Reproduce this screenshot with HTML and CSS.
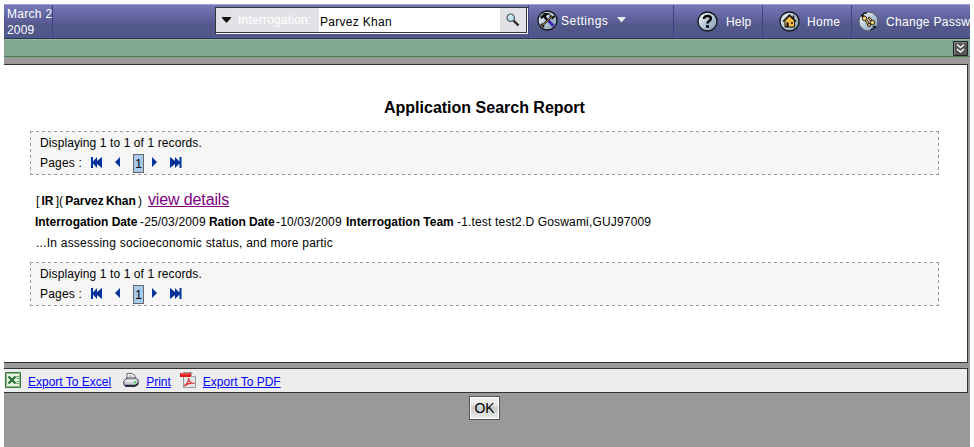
FILE: index.html
```html
<!DOCTYPE html>
<html lang="en">
<head>
<meta charset="utf-8">
<title>Application Search Report</title>
<link rel="stylesheet" href="styles.css">
</head>
<body>
<svg class="defs" width="0" height="0">
  <defs>
    <linearGradient id="ball" x1="0" y1="0" x2="1" y2="1"><stop offset="0" stop-color="#fff"/><stop offset=".5" stop-color="#b5c8d6"/><stop offset="1" stop-color="#7796ae"/></linearGradient>
    <symbol id="pager" viewBox="0 0 92 11">
      <path d="M0 0h2v4.500l4-4.500v4l5-4v11l-5-4v4l-4-4.500v4.500h-2zM29 0v10l-5-5zM61 0v10l5-5zM79 0l5 4v-4l4.500 4.500v-4.500h2v11h-2v-4.500l-4.500 4.500v-4l-5 4z" fill="#039"/>
    </symbol>
  </defs>
</svg>
<div class="app">
  <header class="topbar">
    <div class="date"><span class="d1">March 2</span><span class="d2">2009</span></div>
    <div class="finder">
      <div class="search">
        <div class="scope">
          <svg width="9" height="6" viewBox="0 0 9 6"><path d="M0 0h9v1L5 5.500H4L0 1z" fill="#111"/></svg>
          <span class="scope-label">Interrogation:</span>
        </div>
        <div class="query"><span>Parvez Khan</span></div>
        <div class="go">
          <svg width="14" height="14" viewBox="0 0 14 14"><path d="M7.500 7.500l5 5" stroke="#222" stroke-width="2.300"/><circle cx="4.700" cy="4.700" r="3.700" fill="#c5e4f2" stroke="#46555f" stroke-width="1.200"/><path d="M2.500 4.500q.3-2 2.300-2" fill="none" stroke="#fff"/></svg>
        </div>
      </div>
    </div>
    <div class="item settings">
      <svg width="21" height="21" viewBox="0 0 21 21"><circle cx="10.500" cy="10.500" r="9.500" fill="url(#ball)" stroke="#15171c" stroke-width="1.300"/><path d="M10.500 9.500l6 6.500" stroke="#4724b5" stroke-width="3"/><path d="M3 7l4-4h5l1.500 2-3-.5-1.500 2 2 3-1.500 1.500-3-3.500-2 1.500z" fill="#111"/><path d="M4.500 16L15 6.500m-2-1l2.500 2.500 2-2M4 14l3 3" fill="none" stroke="#111" stroke-width="2"/><path d="M5 15.500L15 6.500" stroke="#d5b45b" stroke-width=".8"/></svg>
      <span class="t-settings">Settings</span>
      <svg class="caret" width="9" height="6" viewBox="0 0 9 6"><path d="M0 0h9L4.500 5.500z" fill="#e8e8ee"/></svg>
    </div>
    <div class="item help">
      <svg width="21" height="21" viewBox="0 0 21 21"><circle cx="10.500" cy="10.500" r="9.500" fill="url(#ball)" stroke="#15171c" stroke-width="1.300"/><path d="M7.200 8V6.500Q8 5 10.500 5q3.300 0 3.300 2.500 0 1.500-1.500 2.300-1.800 1-1.800 2.700" fill="none" stroke="#000" stroke-width="2.500"/><path d="M9 14.200h3v2.500H9z"/></svg>
      <span class="t-help">Help</span>
    </div>
    <div class="item home">
      <svg width="21" height="21" viewBox="0 0 21 21"><circle cx="10.500" cy="10.500" r="9.500" fill="url(#ball)" stroke="#15171c" stroke-width="1.300"/><path d="M6 9.500v6.500h9.500V9.500l-5-4.500z" fill="#f4bd42" stroke="#17120a"/><path d="M4 10.500l6.500-6.500 6.500 6.500M14.500 8V4.500" fill="none" stroke="#17120a" stroke-width="1.500"/><path d="M7.500 11.500h2V16h-2z"/><path d="M12 11h2v2h-2z" fill="#5a3800"/></svg>
      <span class="t-home">Home</span>
    </div>
    <div class="item change">
      <svg width="21" height="21" viewBox="0 0 21 21"><circle cx="10.500" cy="10.500" r="9.500" fill="url(#ball)" stroke="#55616c" stroke-width="1"/><path d="M3.500 5Q6 1.500 9 2M17.500 15.500q-2 3-5 3.500" fill="none" stroke="#111" stroke-width="1.300"/><path d="M3 4l4 .500-3 2zM18 17l-4-1 3-1.500z"/><g fill="#f6d47b" stroke="#2c1c08"><path d="M6.500 8l3.500 6.500 2-1-4-6z"/><circle cx="6.500" cy="7.500" r="2.200"/><circle cx="11" cy="14" r="1.500"/><path d="M10 7l3.500 4 1.200-1.200-3.500-3.800z"/><circle cx="14.500" cy="11.500" r="2.200"/></g></svg>
      <span class="t-change">Change Passw</span>
    </div>
  </header>
  <div class="strip">
    <svg width="15" height="15" viewBox="0 0 15 15"><path d="M.5.5h14v14H.5z" fill="#555" stroke="#222"/><path d="M1.500 13.500v-12h12" fill="none" stroke="#888"/><path d="M4 3.500l3.500 3L11 3.500M4 8l3.500 3L11 8" fill="none" stroke="#fff" stroke-width="1.500"/></svg>
  </div>
  <main class="panel">
    <h1><span class="t-title">Application Search Report</span></h1>
    <section class="pages">
      <p><span class="t-disp">Displaying 1 to 1 of 1 records.</span></p>
      <div class="nav"><span class="t-pages">Pages :</span><div class="ctl"><svg width="92" height="11"><use href="#pager"/></svg><span class="cur">1</span></div></div>
    </section>
    <article class="result">
      <p class="line head"><span class="t-name">[ <b>IR</b> ]( <b>Parvez Khan</b> )</span> <a class="t-view">view details</a></p>
      <p class="line meta"><b class="m1">Interrogation Date</b> <span class="m2">-25/03/2009</span> <b class="m3">Ration Date</b> <span class="m4">-10/03/2009</span> <b class="m5">Interrogation Team</b> <span class="m6">-1.test test2.D Goswami,GUJ97009</span></p>
      <p class="line snippet"><span class="t-snip">...In assessing socioeconomic status, and more partic</span></p>
    </article>
    <section class="pages">
      <p><span class="t-disp">Displaying 1 to 1 of 1 records.</span></p>
      <div class="nav"><span class="t-pages">Pages :</span><div class="ctl"><svg width="92" height="11"><use href="#pager"/></svg><span class="cur">1</span></div></div>
    </section>
  </main>
  <footer class="exports">
    <svg width="16" height="16" viewBox="0 0 16 16"><path d="M.5.5h15v15H.5z" fill="#e9f3e3" stroke="#397c40"/><path d="M1.500 1.500h13v13h-13z" fill="none" stroke="#8eb982"/><path d="M3.500 4.500l7 7M10.500 4.500L3.500 11.500" stroke="#28733a" stroke-width="2.400"/><path d="M11 4.500h3M11.500 6.500H14M11.500 9.500H14M11 11.500h3" stroke="#77a477"/></svg>
    <a class="t-excel">Export To Excel</a>
    <svg class="printer" width="16" height="16" viewBox="0 0 16 16"><path d="M4 7V1.500h5l3 2V7" fill="#fff" stroke="#666"/><path d="M.8 9L4 6h9l2.200 2v4.500L12 14.500H2.500l-1.700-2z" fill="#c9ccd7" stroke="#333746"/><path d="M1.500 9h10L14 7" fill="none" stroke="#fff"/><path d="M5.500 4h4M5.500 6h5" stroke="#999"/><path d="M2 13.500h10l3-2" fill="none" stroke="#22263a" stroke-width="1.500"/><path d="M11 9.500h2v1.500h-2z" fill="#18d818"/></svg>
    <a class="t-print">Print</a>
    <svg class="pdf" width="16" height="16" viewBox="0 0 16 16"><path d="M3.500.500h8l4 4v11h-12z" fill="#e5e5e8" stroke="#999"/><path d="M11.500.5v4h4" fill="#fff" stroke="#aaa"/><path d="M0 1h11v4H0z" fill="#e3181c"/><path d="M1 2h9" stroke="#f77"/><path d="M4 14c3-2 5-5 4.500-8 .5 4 3 5.500 6 5.500-4-1-7 0-10.500 2.500z" fill="none" stroke="#d9363b" stroke-width="1.200"/></svg>
    <a class="t-pdf">Export To PDF</a>
  </footer>
  <div class="actions"><button><span>OK</span></button></div>
</div>
</body>
</html>
```
FILE: styles.css
```css
* { box-sizing: border-box; }
body { margin: 0; padding: 4px 4px 0; background: #fff; font: 12px/14px "Liberation Sans", Arial, sans-serif; color: #000; overflow: hidden; }
p, h1 { margin: 0; }
svg { display: block; flex: none; }
.defs { position: absolute; }
span, a, b { white-space: nowrap; }
.app { width: 966px; height: 443px; background: #999; overflow: hidden; }

.topbar { display: flex; height: 35px; overflow: hidden; color: #fff; background: linear-gradient(#7779b7, #6264a0 35%, #525889 65%, #51568c); border-top: 1px solid #a0a1db; border-bottom: 1px solid #30324d; }
.date { flex: none; width: 49px; border-right: 1px solid #41438a; padding: 1px 0 0 3px; overflow: hidden; line-height: 16px; }
.date span { display: block; }
.d1 { letter-spacing: .3px; }
.d2 { letter-spacing: .2px; }
.finder { flex: none; width: 475px; padding: 2px 0 0 162px; }
.search { display: flex; width: 313px; height: 27px; border: 1px solid #333; border-right: 0; border-bottom: 0; background: #fff; box-shadow: inset -1px -1px #fff, inset -2px -2px #333; padding: 0 2px 2px 0; }
.scope { display: flex; align-items: center; width: 103px; padding-left: 6px; background: #e2e2e6; }
.scope-label { margin-left: 7px; letter-spacing: .2px; }
.query { display: flex; align-items: center; width: 181px; padding: 3px 0 0 1px; color: #000; letter-spacing: .3px; }
.go { display: flex; align-items: center; justify-content: center; width: 26px; background: #e2e2e6; }
.item { display: flex; flex: none; align-items: center; border-left: 1px solid #41438a; }
.settings { width: 145px; padding: 0 0 2px 8px; }
.settings span { margin-left: 3px; width: 48px; letter-spacing: .5px; }
.settings .caret { margin: 0 0 1px 8px; }
.help { width: 89px; padding-left: 23px; }
.help span { margin-left: 8px; letter-spacing: .2px; }
.home { width: 89px; padding-left: 16px; }
.home span { margin-left: 7px; letter-spacing: .3px; }
.change { width: 130px; padding-left: 6px; }
.change span { margin-left: 7px; letter-spacing: .3px; }

.strip { display: flex; justify-content: flex-end; height: 18px; padding: 1px 2px 0 0; background: #80a792; border-top: 1px solid #92b7a1; border-bottom: 1px solid #477e51; }
.panel { width: 964px; height: 299px; margin-top: 7px; padding: 33px 28px 0 26px; background: #fff; border: solid #333; border-width: 1px 1px 1px 0; }
h1 { height: 33px; padding-left: 354px; font-size: 16px; line-height: 19px; }
.pages { height: 44px; padding: 4px 9px; background: repeating-linear-gradient(90deg, #999 0 3px, transparent 3px 6px) 0 0 / 100% 1px no-repeat, repeating-linear-gradient(90deg, #999 0 3px, transparent 3px 6px) 0 100% / 100% 1px no-repeat, repeating-linear-gradient(#999 0 3px, transparent 3px 6px) 0 0 / 1px 100% no-repeat, repeating-linear-gradient(#999 0 3px, transparent 3px 6px) 100% 0 / 1px 100% no-repeat, #f6f6f6; }
.pages p { height: 18px; line-height: 16px; padding-left: 1px; letter-spacing: .1px; }
.nav { display: flex; align-items: center; height: 20px; padding-left: 1px; }
.nav .t-pages { width: 51px; letter-spacing: .2px; }
.ctl { position: relative; width: 92px; }
.ctl svg { margin-top: -2px; }
.cur { position: absolute; left: 42px; top: -5px; width: 11px; height: 19px; border: 1px solid #666; background: #a7c9ee; line-height: 18px; text-align: center; }
.result { height: 87px; padding: 14px 0 0 5px; }
.line { display: flex; align-items: baseline; height: 22px; line-height: 22px; }
.head { padding-left: 1px; }
.t-name { width: 112px; word-spacing: -1px; letter-spacing: -.05px; }
.meta { height: 21px; }
.snippet { padding-left: 1px; }
.t-snip { letter-spacing: .23px; }
.meta > * { flex: none; }
.m1 { width: 105px; letter-spacing: -.05px; }
.m2, .m4 { letter-spacing: .15px; }
.m2 { width: 69px; }
.m3 { width: 67px; letter-spacing: -.1px; }
.m4 { width: 70px; }
.m5 { width: 111px; }
.m6 { letter-spacing: .17px; }
a { color: #00f; text-decoration: underline; }
.t-view { color: #800080; font-size: 16px; letter-spacing: -.13px; }
.exports { display: flex; align-items: center; width: 964px; height: 25px; margin-top: 5px; padding-left: 1px; background: #ededed; border: solid #333; border-width: 1px 1px 1px 0; }
.exports a { margin: 3px 0 0 7px; }
.exports .printer { margin-left: 12px; }
.exports .pdf { margin-left: 9px; }
.exports svg { margin-bottom: 1px; }
.actions { display: flex; justify-content: flex-start; padding: 3px 0 0 465px; }
button { width: 31px; height: 24px; margin: 0; padding: 0; border: 1px solid #555; background: linear-gradient(#eee 0 30%, #ccc 50%, #eee); box-shadow: inset 0 0 0 1px #fff; font: 14px/18px "Liberation Sans", Arial, sans-serif; color: #000; text-align: center; }
```
